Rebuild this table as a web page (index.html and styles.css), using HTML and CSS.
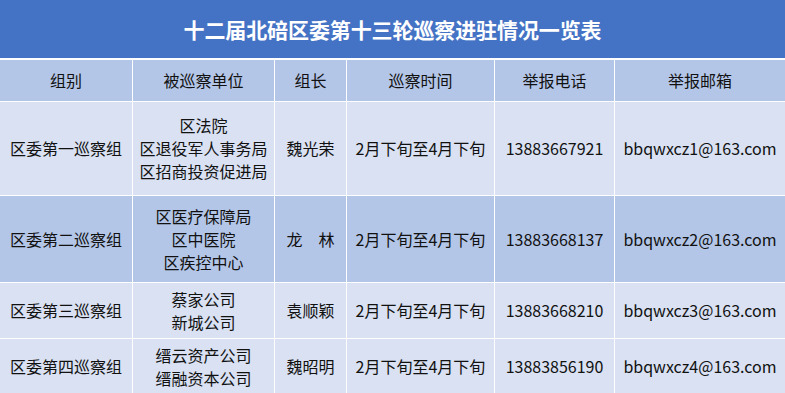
FILE: index.html
```html
<!DOCTYPE html>
<html lang="zh-CN">
<head>
<meta charset="utf-8">
<title>十二届北碚区委第十三轮巡察进驻情况一览表</title>
<link rel="stylesheet" href="styles.css">
</head>
<body>
<div class="sheet">
  <div class="title">十二届北碚区委第十三轮巡察进驻情况一览表</div>
  <div class="grid">
    <div class="cell head">组别</div>
    <div class="cell head">被巡察单位</div>
    <div class="cell head">组长</div>
    <div class="cell head">巡察时间</div>
    <div class="cell head">举报电话</div>
    <div class="cell head">举报邮箱</div>

    <div class="cell light r1">区委第一巡察组</div>
    <div class="cell light r1">区法院<br>区退役军人事务局<br>区招商投资促进局</div>
    <div class="cell light r1">魏光荣</div>
    <div class="cell light r1">2月下旬至4月下旬</div>
    <div class="cell light r1">13883667921</div>
    <div class="cell light r1">bbqwxcz1@163.com</div>

    <div class="cell dark r2">区委第二巡察组</div>
    <div class="cell dark r2">区医疗保障局<br>区中医院<br>区疾控中心</div>
    <div class="cell dark r2">龙　林</div>
    <div class="cell dark r2">2月下旬至4月下旬</div>
    <div class="cell dark r2">13883668137</div>
    <div class="cell dark r2">bbqwxcz2@163.com</div>

    <div class="cell light r3">区委第三巡察组</div>
    <div class="cell light r3">蔡家公司<br>新城公司</div>
    <div class="cell light r3">袁顺颖</div>
    <div class="cell light r3">2月下旬至4月下旬</div>
    <div class="cell light r3">13883668210</div>
    <div class="cell light r3">bbqwxcz3@163.com</div>

    <div class="cell light r4">区委第四巡察组</div>
    <div class="cell light r4">缙云资产公司<br>缙融资本公司</div>
    <div class="cell light r4">魏昭明</div>
    <div class="cell light r4">2月下旬至4月下旬</div>
    <div class="cell light r4">13883856190</div>
    <div class="cell light r4">bbqwxcz4@163.com</div>
  </div>
</div>
</body>
</html>
```
FILE: styles.css
```css
html, body {
  margin: 0;
  padding: 0;
  background: #ffffff;
}

body {
  font-family: "Noto Sans CJK SC", "Noto Sans", sans-serif;
  color: #111111;
  overflow: hidden;
}

.sheet {
  width: 785px;
  display: flex;
  flex-direction: column;
  gap: 2px;
}

.title {
  height: 58px;
  background: #4472c4;
  color: #ffffff;
  font-size: 21px;
  font-weight: 700;
  display: flex;
  align-items: center;
  justify-content: center;
  letter-spacing: -0.1px;
}

.grid {
  display: grid;
  grid-template-columns: 132px 141px 71px 147px 119px 1fr;
  grid-template-rows: 41px 93px 86px 55px 55px;
  gap: 1px;
  background: #ffffff;
}

.cell {
  display: flex;
  align-items: center;
  justify-content: center;
  text-align: center;
  font-size: 16px;
  line-height: 23px;
  white-space: nowrap;
}

.head {
  background: #b4c6e7;
}

.light {
  background: #d9e1f2;
}

.dark {
  background: #b4c6e7;
}
```
